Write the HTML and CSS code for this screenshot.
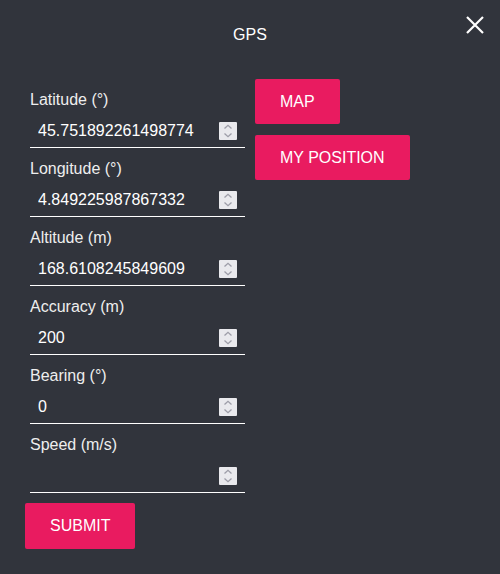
FILE: index.html
```html
<!DOCTYPE html>
<html lang="en">
<head>
    <meta charset="UTF-8">
    <meta name="viewport" content="width=device-width, initial-scale=1.0">
    <title>GPS</title>
    <link rel="stylesheet" href="styles.css">
</head>
<body>
    <div class="dialog">
        <div class="header">
            <span class="title">GPS</span>
            <span class="close-btn">
                <svg width="18" height="18" viewBox="0 0 18 18">
                    <path d="M1 1 L17 17 M17 1 L1 17" stroke="#fff" stroke-width="2.2" fill="none"/>
                </svg>
            </span>
        </div>
        <form class="form">
            <div class="columns">
                <div class="fields">
                    <div class="field">
                        <label>Latitude (°)</label>
                        <div class="input-row">
                            <input type="number" value="45.751892261498774">
                            <span class="spinner"><svg width="18" height="18" viewBox="0 0 18 18"><path d="M5.5 6.5 L9 3.3 L12.5 6.5 M5.5 11.5 L9 14.7 L12.5 11.5" stroke="#9d9da8" stroke-width="1.3" fill="none"/></svg></span>
                        </div>
                    </div>
                    <div class="field">
                        <label>Longitude (°)</label>
                        <div class="input-row">
                            <input type="number" value="4.849225987867332">
                            <span class="spinner"><svg width="18" height="18" viewBox="0 0 18 18"><path d="M5.5 6.5 L9 3.3 L12.5 6.5 M5.5 11.5 L9 14.7 L12.5 11.5" stroke="#9d9da8" stroke-width="1.3" fill="none"/></svg></span>
                        </div>
                    </div>
                    <div class="field">
                        <label>Altitude (m)</label>
                        <div class="input-row">
                            <input type="number" value="168.6108245849609">
                            <span class="spinner"><svg width="18" height="18" viewBox="0 0 18 18"><path d="M5.5 6.5 L9 3.3 L12.5 6.5 M5.5 11.5 L9 14.7 L12.5 11.5" stroke="#9d9da8" stroke-width="1.3" fill="none"/></svg></span>
                        </div>
                    </div>
                    <div class="field">
                        <label>Accuracy (m)</label>
                        <div class="input-row">
                            <input type="number" value="200">
                            <span class="spinner"><svg width="18" height="18" viewBox="0 0 18 18"><path d="M5.5 6.5 L9 3.3 L12.5 6.5 M5.5 11.5 L9 14.7 L12.5 11.5" stroke="#9d9da8" stroke-width="1.3" fill="none"/></svg></span>
                        </div>
                    </div>
                    <div class="field">
                        <label>Bearing (°)</label>
                        <div class="input-row">
                            <input type="number" value="0">
                            <span class="spinner"><svg width="18" height="18" viewBox="0 0 18 18"><path d="M5.5 6.5 L9 3.3 L12.5 6.5 M5.5 11.5 L9 14.7 L12.5 11.5" stroke="#9d9da8" stroke-width="1.3" fill="none"/></svg></span>
                        </div>
                    </div>
                    <div class="field">
                        <label>Speed (m/s)</label>
                        <div class="input-row">
                            <input type="number" value="">
                            <span class="spinner"><svg width="18" height="18" viewBox="0 0 18 18"><path d="M5.5 6.5 L9 3.3 L12.5 6.5 M5.5 11.5 L9 14.7 L12.5 11.5" stroke="#9d9da8" stroke-width="1.3" fill="none"/></svg></span>
                        </div>
                    </div>
                </div>
                <div class="actions">
                    <button type="button" class="button">Map</button>
                    <button type="button" class="button">My position</button>
                </div>
            </div>
            <button type="button" class="button submit">Submit</button>
        </form>
    </div>
</body>
</html>
```

FILE: styles.css
```css
body {
    margin: 0;
    height: 100vh;
    background-color: #31343c;
    color: #fff;
    font-family: "Liberation Sans", Arial, sans-serif;
    overflow: hidden;
}

.dialog {
    position: relative;
}

.header {
    padding-top: 26px;
    height: 53px;
    text-align: center;
    box-sizing: border-box;
}

.title {
    font-size: 16px;
    line-height: 18px;
}

.close-btn {
    position: absolute;
    top: 16px;
    right: 16px;
    width: 18px;
    height: 18px;
    cursor: pointer;
}

.close-btn svg {
    display: block;
}

.form {
    padding-top: 26px;
}

.columns {
    display: flex;
    align-items: flex-start;
}

.fields {
    width: 215px;
    margin-left: 30px;
    padding-top: 11px;
}

.field {
    display: flex;
    flex-direction: column;
    margin-bottom: 11px;
}

.field:last-child {
    margin-bottom: 10px;
}

.field label {
    font-size: 16px;
    line-height: 18px;
    color: #eee;
    margin-top: 1px;
    margin-bottom: 3px;
}

.input-row {
    display: flex;
    align-items: center;
    height: 36px;
    box-sizing: border-box;
    border-bottom: 1px solid #fff;
    padding-top: 3px;
}

.input-row input {
    flex: 1;
    min-width: 0;
    background: transparent;
    border: none;
    color: #fff;
    font-family: inherit;
    font-size: 16px;
    padding: 0 8px;
    outline: none;
    -moz-appearance: textfield;
}

.input-row input::-webkit-inner-spin-button,
.input-row input::-webkit-outer-spin-button {
    -webkit-appearance: none;
    margin: 0;
}

.spinner {
    width: 18px;
    height: 18px;
    margin-right: 8px;
    background-color: #e9e9ed;
    border-radius: 1px;
}

.spinner svg {
    display: block;
}

.actions {
    display: flex;
    flex-direction: column;
    align-items: flex-start;
    gap: 11px;
    margin-left: 10px;
}

.button {
    background-color: #e91b60;
    border: none;
    border-radius: 2px;
    color: #fff;
    font-family: inherit;
    font-size: 16px;
    text-transform: uppercase;
    height: 45px;
    padding: 0 25px;
    cursor: pointer;
}

.submit {
    margin-left: 25px;
    height: 46px;
}
```
